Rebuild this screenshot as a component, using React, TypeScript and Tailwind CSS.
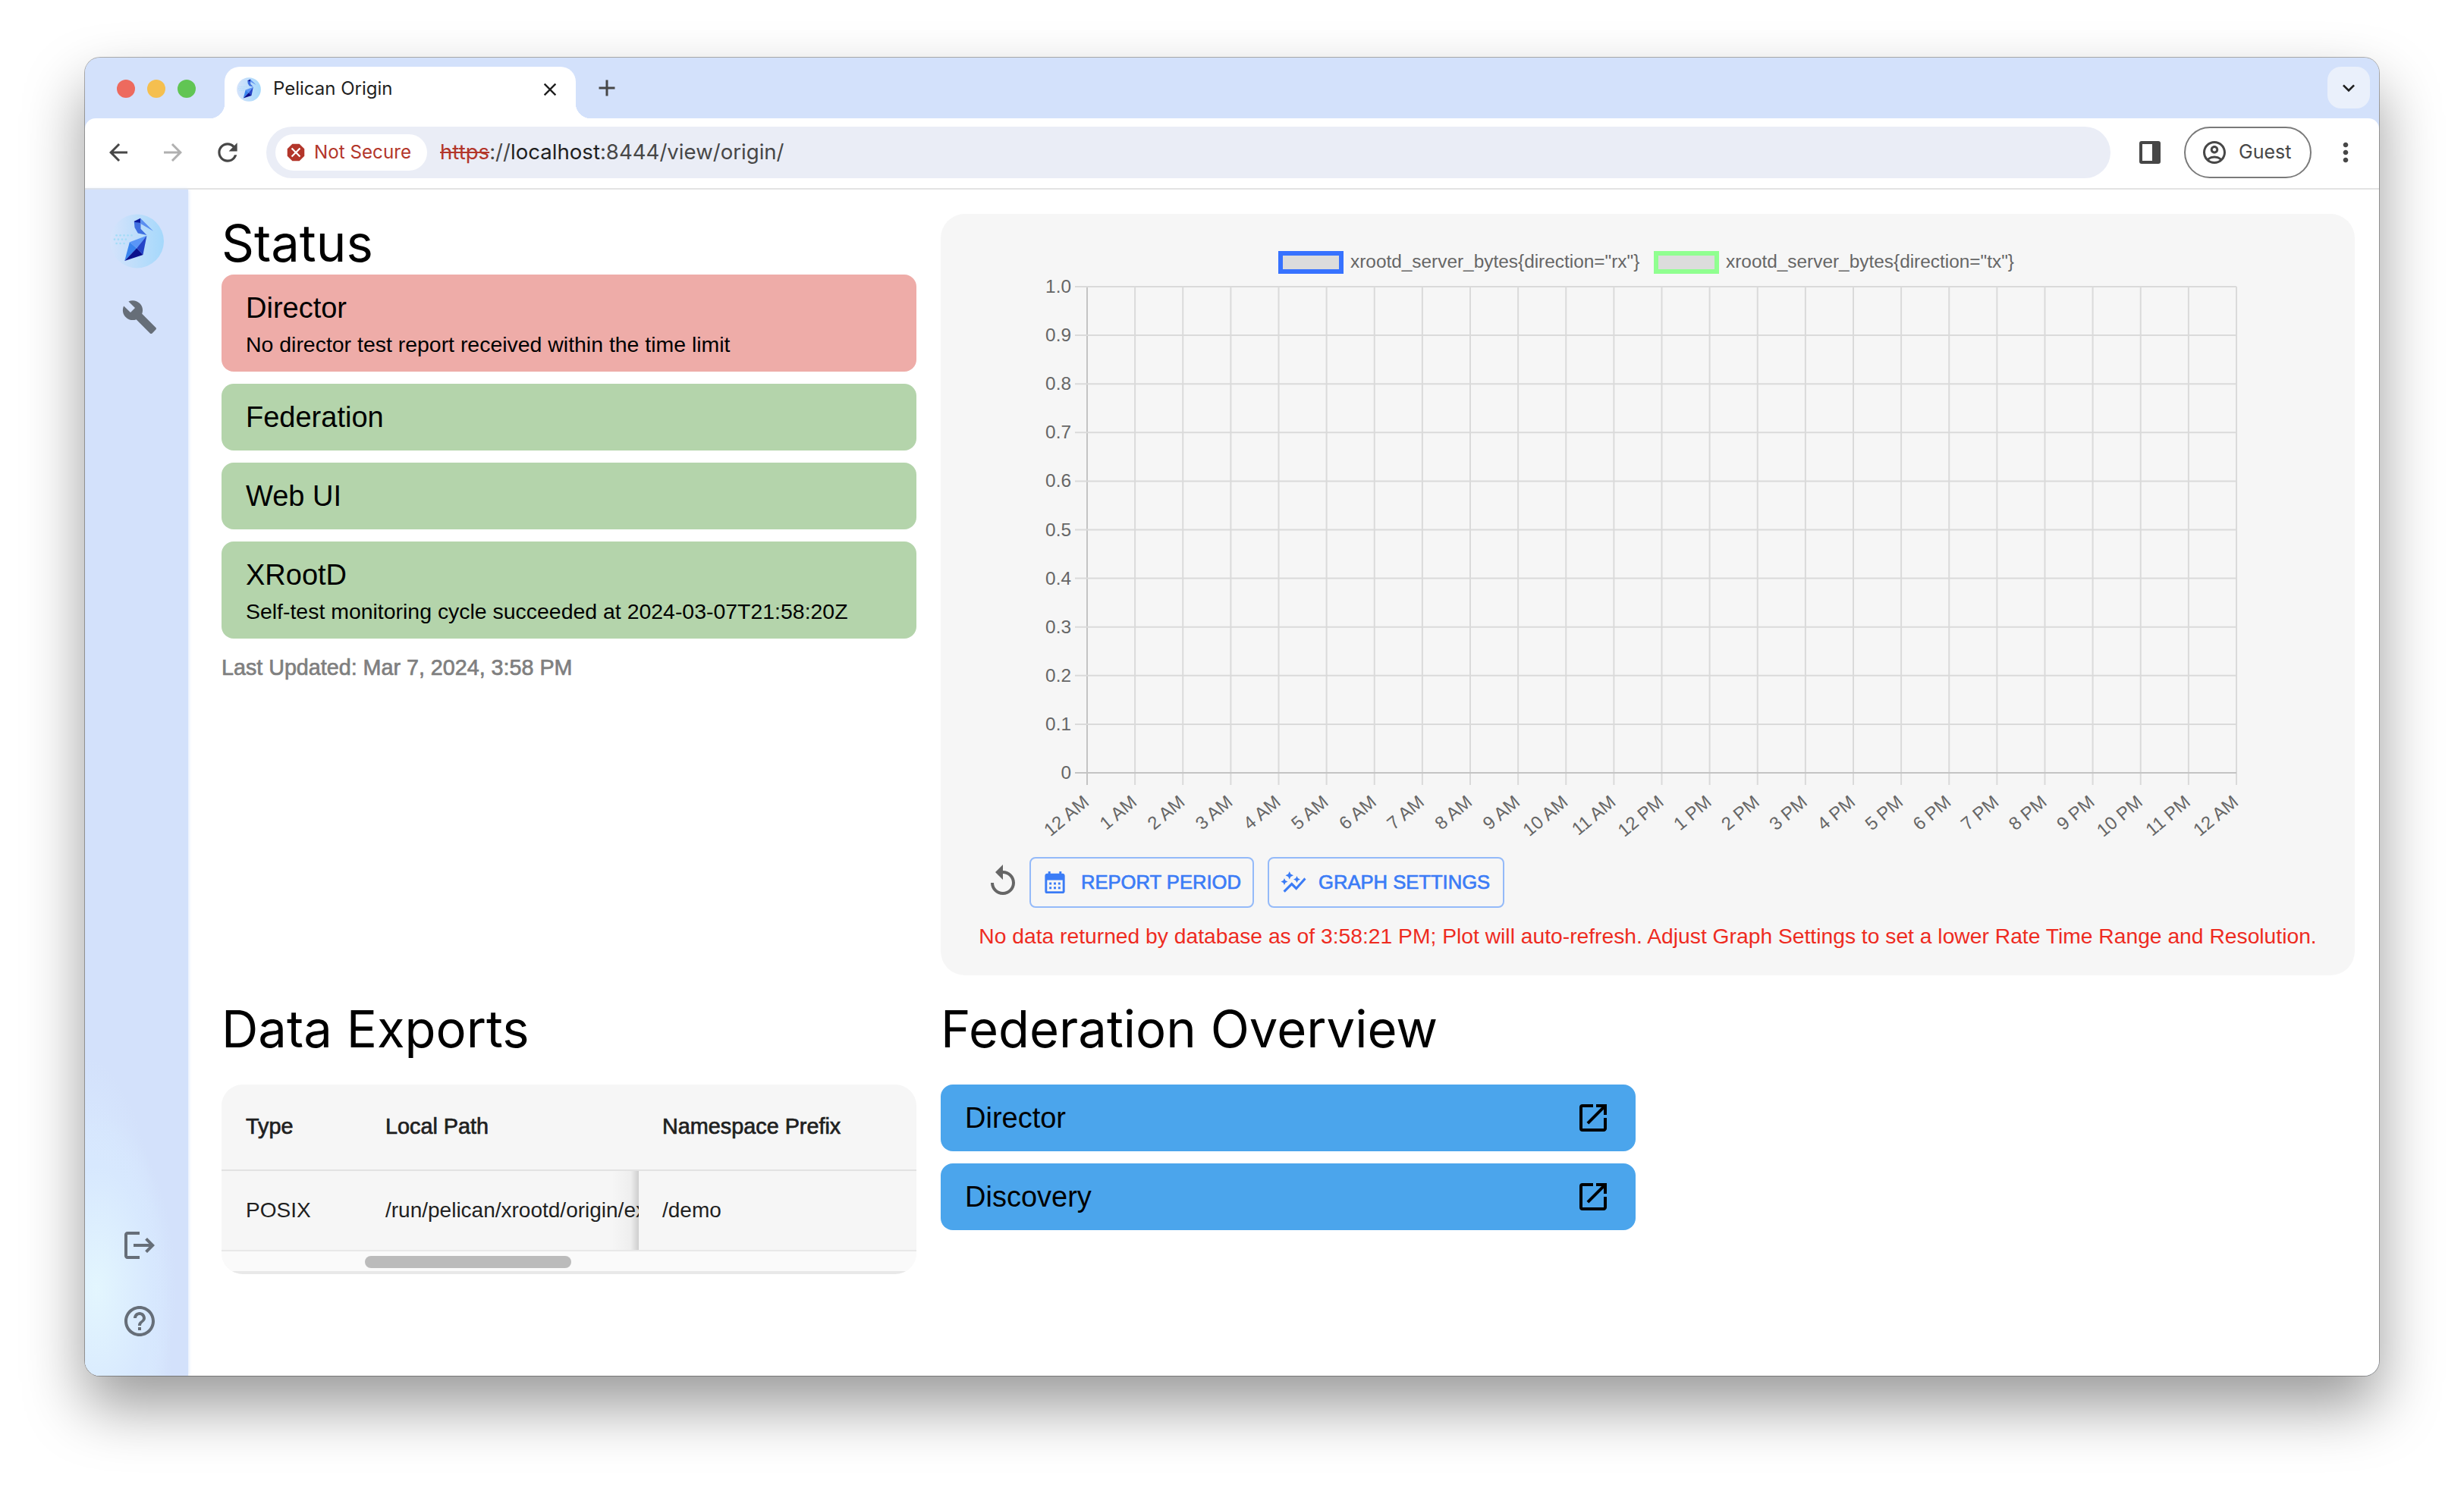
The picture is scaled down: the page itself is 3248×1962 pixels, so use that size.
import React from 'react';
import {
  MdAdd,
  MdArrowBack,
  MdArrowForward,
  MdAutoGraph,
  MdBuild,
  MdCalendarMonth,
  MdClose,
  MdDangerous,
  MdHelpOutline,
  MdKeyboardArrowDown,
  MdLogout,
  MdMoreVert,
  MdOpenInNew,
  MdOutlineAccountCircle,
  MdRefresh,
  MdReplay,
} from 'react-icons/md';

const hours = [
  '12 AM', '1 AM', '2 AM', '3 AM', '4 AM', '5 AM', '6 AM', '7 AM', '8 AM', '9 AM', '10 AM', '11 AM',
  '12 PM', '1 PM', '2 PM', '3 PM', '4 PM', '5 PM', '6 PM', '7 PM', '8 PM', '9 PM', '10 PM', '11 PM', '12 AM',
];
const yTicks = ['1.0', '0.9', '0.8', '0.7', '0.6', '0.5', '0.4', '0.3', '0.2', '0.1', '0'];

function Logo({ className }: { className: string }) {
  return (
    <svg viewBox="74 96 214 216" className={className}>
      <defs>
        <linearGradient id="logoBg" x1="0" x2="1" y1="0" y2="0">
          <stop offset="0" stopColor="#d5e3fb" />
          <stop offset="1" stopColor="#a5d8fb" />
        </linearGradient>
      </defs>
      <circle cx="181" cy="204" r="107" fill="url(#logoBg)" />
      {[100, 115, 130, 145, 160].map((x) => <circle key={x} cx={x} cy="181" r="4" fill="#a5dcf7" />)}
      {[92, 107, 122, 137].map((x) => <circle key={x} cx={x} cy="197" r="4" fill="#a5dcf7" />)}
      {[100, 115, 130].map((x) => <circle key={x} cx={x} cy="213" r="4" fill="#a5dcf7" />)}
      <polygon points="195,113 246,164 196,135" fill="#5b8ff0" />
      <polygon points="170,128 196,130 196,155 220,180 185,172 172,150" fill="#3f6fe0" />
      <polygon points="170,125 195,113 195,132 170,128" fill="#0b1a9c" />
      <polygon points="152,208 220,182 180,232" fill="#5a96f7" />
      <polygon points="152,208 180,232 132,282" fill="#3a84ee" />
      <polygon points="220,182 205,258 180,232" fill="#2444c8" />
      <polygon points="180,232 205,258 132,282" fill="#0b0f8c" />
    </svg>
  );
}

function TrafficLights() {
  return (
    <div className="flex gap-[16px] ml-[42px] mt-[29px]">
      <div className="w-[24px] h-[24px] rounded-full bg-[#ed6a5e]" />
      <div className="w-[24px] h-[24px] rounded-full bg-[#f5bf4f]" />
      <div className="w-[24px] h-[24px] rounded-full bg-[#61c554]" />
    </div>
  );
}

function BrowserChrome() {
  return (
    <>
      {/* tab strip */}
      <div className="h-[80px] flex bg-[#d3e1fb] shrink-0">
        <TrafficLights />
        <div className="relative ml-[38px] mt-[12px] w-[463px] h-[68px] bg-white rounded-t-[20px] flex items-center pl-[16px]">
          <div className="absolute -left-[20px] bottom-0 w-[20px] h-[20px] bg-[radial-gradient(circle_at_0_0,#d3e1fb_20px,#ffffff_20.5px)]" />
          <div className="absolute -right-[20px] bottom-0 w-[20px] h-[20px] bg-[radial-gradient(circle_at_100%_0,#d3e1fb_20px,#ffffff_20.5px)]" />
          <Logo className="w-[32px] h-[32px] -mt-[8px]" />
          <span className="ml-[16px] -mt-[10px] text-[24px] text-[#1f1f1f] font-['Inter',sans-serif]">Pelican Origin</span>
          <MdClose className="ml-auto mr-[20px] -mt-[8px] text-[#1f1f1f]" size={28} />
        </div>
        <MdAdd className="ml-[23px] mt-[22px] text-[#474747]" size={36} />
        <div className="ml-auto mr-[12px] mt-[12px] w-[56px] h-[55px] rounded-[18px] bg-[#eaf0fb] flex items-center justify-center">
          <MdKeyboardArrowDown className="text-[#1f1f1f]" size={32} />
        </div>
      </div>

      {/* toolbar */}
      <div className="h-[94px] bg-white rounded-t-[14px] border-b-2 border-[#e3e3e3] flex items-center shrink-0 pb-[2px] font-['Inter',sans-serif]">
        <MdArrowBack className="ml-[26px] text-[#474747]" size={36} />
        <MdArrowForward className="ml-[36px] text-[#b0b0b0]" size={36} />
        <MdRefresh className="ml-[35px] text-[#474747]" size={38} />
        <div className="ml-[32px] w-[2431px] h-[68px] rounded-full bg-[#eaedf6] flex items-center pl-[12px]">
          <div className="h-[48px] w-[200px] rounded-full bg-white flex items-center pl-[12px] text-[#b3362a]">
            <MdDangerous size={30} />
            <span className="ml-[9px] text-[24.2px]">Not Secure</span>
          </div>
          <div className="ml-[17px] text-[27.6px] text-[#474747]">
            <span className="text-[#b3362a] line-through">https</span>
            <span>://</span>
            <span className="text-[#1f1f1f]">localhost</span>
            <span>:8444/view/origin/</span>
          </div>
        </div>
        <svg viewBox="0 0 28 30" className="ml-[38px] w-[28px] h-[30px]">
          <rect x="0" y="0" width="28" height="30" rx="3" fill="#474747" />
          <rect x="4" y="4" width="13" height="22" fill="#ffffff" />
        </svg>
        <div className="ml-[31px] w-[168px] h-[68px] rounded-full border-2 border-[#7a7a7a] flex items-center pl-[20px] text-[#474747]">
          <MdOutlineAccountCircle size={36} />
          <span className="ml-[14px] text-[25px]">Guest</span>
        </div>
        <MdMoreVert className="ml-[25px] text-[#474747]" size={40} />
      </div>
    </>
  );
}

function Sidebar() {
  return (
    <div className="relative w-[136px] shrink-0 flex flex-col items-center pl-[8px] pt-[32px] pb-[48px] text-[#666e78] bg-[#d3e1fb] bg-[radial-gradient(ellipse_105px_230px_at_15px_1450px,#e3f6fe,#d7e8fe_70%,transparent),radial-gradient(ellipse_115px_420px_at_0_1564px,#d8e8fe_70%,transparent)] shadow-[0_0_5px_#d3e1fb]">
      <Logo className="w-[71px] h-[72px] mr-[7px] shrink-0" />
      <MdBuild className="mt-[40px]" size={48} />
      <MdLogout className="mt-auto" size={48} />
      <MdHelpOutline className="mt-[52px]" size={48} />
    </div>
  );
}

function StatusCard({ title, message, ok }: { title: string; message?: string; ok: boolean }) {
  return (
    <div className={`rounded-[16px] px-[32px] flex flex-col justify-center text-black ${ok ? 'bg-[#b4d4ab]' : 'bg-[#eeaca8]'} ${message ? 'h-[128px]' : 'h-[88px]'}`}>
      <div className="text-[38px] leading-[48px]">{title}</div>
      {message && <div className="text-[28.45px] leading-[40px] mt-[4px] -mb-[4px]">{message}</div>}
    </div>
  );
}

function Chart() {
  const gx = (i: number) => 193 + i * 63.125;
  const gy = (i: number) => 96 + i * 64.1;
  return (
    <svg viewBox="0 0 1864 843" className="w-[1864px] h-[843px] block font-['Liberation_Sans',sans-serif]">
      <rect x="448" y="52" width="80" height="24" fill="#dcdcdc" stroke="#3772ff" strokeWidth="6" />
      <text x="540" y="71" fontSize="24.4" fill="#666666">{'xrootd_server_bytes{direction="rx"}'}</text>
      <rect x="943" y="52" width="80" height="24" fill="#dcdcdc" stroke="#90ff90" strokeWidth="6" />
      <text x="1035" y="71" fontSize="24.4" fill="#666666">{'xrootd_server_bytes{direction="tx"}'}</text>

      {hours.map((h, i) => (
        <line key={i} x1={gx(i)} x2={gx(i)} y1="96" y2="753" stroke={i === 0 ? '#c4c4c4' : '#dadada'} strokeWidth="2" />
      ))}
      {yTicks.map((t, i) => (
        <g key={t}>
          <line x1="177" x2={gx(24)} y1={gy(i)} y2={gy(i)} stroke={i === 10 ? '#c4c4c4' : '#dadada'} strokeWidth="2" />
          <text x="172" y={gy(i) + 8} fontSize="24.4" fill="#666666" textAnchor="end">{t}</text>
        </g>
      ))}
      {hours.map((h, i) => (
        <text key={i} x={gx(i) + 4} y={778} fontSize="24" fill="#666666" textAnchor="end" transform={`rotate(-40 ${gx(i) + 4} 778)`}>
          {h}
        </text>
      ))}
    </svg>
  );
}

function ChartPanel() {
  return (
    <div className="w-[1864px] h-[1004px] rounded-[32px] bg-[#f6f6f6] shrink-0">
      <Chart />
      <div className="flex items-center mt-[5px] pl-[58px]">
        <MdReplay className="text-[#666666] -mt-[3px]" size={48} />
        <div className="ml-[11px] w-[296px] h-[67px] rounded-[8px] border-2 border-[#94baf9] flex items-center pl-[14px] text-[#3b7cf6] text-[25.6px] whitespace-nowrap [-webkit-text-stroke:0.7px_#3b7cf6]">
          <MdCalendarMonth size={35} className="shrink-0" />
          <span className="ml-[17px]">REPORT PERIOD</span>
        </div>
        <div className="ml-[18px] w-[312px] h-[67px] rounded-[8px] border-2 border-[#94baf9] flex items-center pl-[14px] text-[#3b7cf6] text-[25.6px] whitespace-nowrap [-webkit-text-stroke:0.7px_#3b7cf6]">
          <MdAutoGraph size={36} className="shrink-0" />
          <span className="ml-[15px]">GRAPH SETTINGS</span>
        </div>
      </div>
      <div className="mt-[17px] text-center text-[28.25px] leading-[40px] text-[#ee2b1f]">
        No data returned by database as of 3:58:21 PM; Plot will auto-refresh. Adjust Graph Settings to set a lower Rate Time Range and Resolution.
      </div>
    </div>
  );
}

function ExportsTable() {
  return (
    <div className="rounded-[28px] overflow-hidden bg-[#f6f6f6] text-[28px] text-[#1f1f1f]">
      <div className="flex items-center h-[114px] border-b-2 border-[#e2e2e2] text-[28.8px] [-webkit-text-stroke:0.7px_#1f1f1f]">
        <div className="w-[184px] pl-[32px]">Type</div>
        <div className="w-[366px] pl-[32px]">Local Path</div>
        <div className="pl-[31px]">Namespace Prefix</div>
      </div>
      <div className="flex items-center h-[106px] border-b-2 border-[#e8e8e8]">
        <div className="w-[184px] pl-[32px]">POSIX</div>
        <div className="relative w-[366px] h-full flex items-center pl-[32px] overflow-hidden whitespace-nowrap">
          /run/pelican/xrootd/origin/export
          <div className="absolute right-0 inset-y-0 w-[36px] bg-gradient-to-r from-transparent via-[rgba(0,0,0,0.03)] via-70% to-[rgba(0,0,0,0.16)]" />
        </div>
        <div className="pl-[31px]">/demo</div>
      </div>
      <div className="h-[30px] bg-[#fafafa] border-b-[4px] border-[#e8e8e8] pt-[6px] pl-[189px]">
        <div className="w-[272px] h-[16px] rounded-full bg-[#bbbbbb]" />
      </div>
    </div>
  );
}

function LinkButton({ label }: { label: string }) {
  return (
    <div className="h-[88px] rounded-[16px] bg-[#4ba5ec] flex items-center justify-between pl-[32px] pr-[32px] text-black text-[38px]">
      {label}
      <MdOpenInNew size={48} />
    </div>
  );
}

export default function App() {
  return (
    <div className="w-[3248px] h-[1962px] bg-white pt-[76px] pl-[112px] overflow-hidden font-['Liberation_Sans',sans-serif]">
      <div className="w-[3024px] h-[1738px] rounded-[20px] overflow-hidden flex flex-col bg-[#d3e1fb] shadow-[0_0_0_1px_rgba(0,0,0,0.3),0_40px_80px_rgba(0,0,0,0.4)]">
        <BrowserChrome />
        <div className="flex flex-1 min-h-0 bg-white">
          <Sidebar />
          <div className="pl-[44px] pt-[32px]">
            <div className="flex gap-[32px]">
              <div className="w-[916px] shrink-0">
                <h1 className="text-[67px] leading-[78px] mb-[2px] font-['Inter',sans-serif] text-black">Status</h1>
                <div className="flex flex-col gap-[16px]">
                  <StatusCard title="Director" message="No director test report received within the time limit" ok={false} />
                  <StatusCard title="Federation" ok />
                  <StatusCard title="Web UI" ok />
                  <StatusCard title="XRootD" message="Self-test monitoring cycle succeeded at 2024-03-07T21:58:20Z" ok />
                </div>
                <div className="mt-[18px] text-[28.7px] leading-[40px] text-[#7f7f7f] [-webkit-text-stroke:0.7px_#7f7f7f]">
                  Last Updated: Mar 7, 2024, 3:58 PM
                </div>
              </div>
              <ChartPanel />
            </div>
            <div className="flex gap-[32px] mt-[32px]">
              <div className="w-[916px] shrink-0">
                <h2 className="text-[67px] leading-[78px] mb-[34px] font-['Inter',sans-serif] text-black">Data Exports</h2>
                <ExportsTable />
              </div>
              <div className="w-[916px] shrink-0">
                <h2 className="text-[67px] leading-[78px] mb-[34px] font-['Inter',sans-serif] text-black">Federation Overview</h2>
                <div className="flex flex-col gap-[16px]">
                  <LinkButton label="Director" />
                  <LinkButton label="Discovery" />
                </div>
              </div>
            </div>
          </div>
        </div>
      </div>
    </div>
  );
}
